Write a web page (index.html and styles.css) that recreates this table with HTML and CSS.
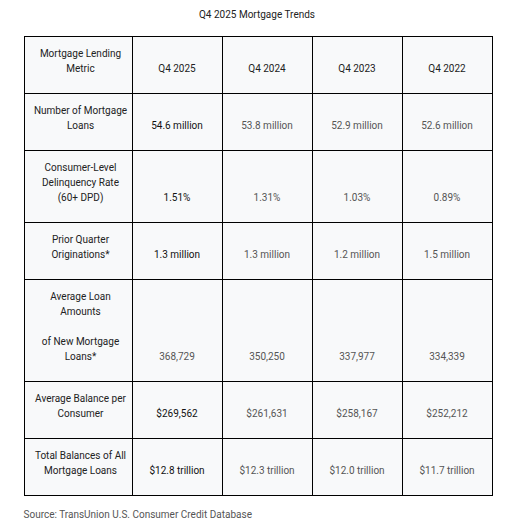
FILE: index.html
```html
<!DOCTYPE html>
<html lang="en">
<head>
  <meta charset="UTF-8">
  <meta name="viewport" content="width=device-width, initial-scale=1.0">
  <title>Q4 2025 Mortgage Trends</title>
  <link rel="stylesheet" href="styles.css">
</head>
<body>
  <div class="wrap">
    <p class="caption">Q4 2025 Mortgage Trends</p>

    <table class="trends">
      <colgroup>
        <col class="c-metric">
        <col class="c-q">
        <col class="c-q">
        <col class="c-q">
        <col class="c-q">
      </colgroup>
      <tr>
        <td class="metric">Mortgage Lending Metric</td>
        <td class="head">Q4 2025</td>
        <td class="head">Q4 2024</td>
        <td class="head">Q4 2023</td>
        <td class="head">Q4 2022</td>
      </tr>
      <tr>
        <td class="metric">Number of Mortgage Loans</td>
        <td class="now">54.6 million</td>
        <td>53.8 million</td>
        <td>52.9 million</td>
        <td>52.6 million</td>
      </tr>
      <tr>
        <td class="metric">Consumer-Level Delinquency Rate (60+ DPD)</td>
        <td class="now">1.51%</td>
        <td>1.31%</td>
        <td>1.03%</td>
        <td>0.89%</td>
      </tr>
      <tr>
        <td class="metric">Prior Quarter Originations*</td>
        <td class="now">1.3 million</td>
        <td>1.3 million</td>
        <td>1.2 million</td>
        <td>1.5 million</td>
      </tr>
      <tr>
        <td class="metric">
          <p>Average Loan Amounts</p>
          <p>of New Mortgage Loans*</p>
        </td>
        <td>368,729</td>
        <td>350,250</td>
        <td>337,977</td>
        <td>334,339</td>
      </tr>
      <tr>
        <td class="metric">Average Balance per Consumer</td>
        <td class="now">$269,562</td>
        <td>$261,631</td>
        <td>$258,167</td>
        <td>$252,212</td>
      </tr>
      <tr>
        <td class="metric">Total Balances of All Mortgage Loans</td>
        <td class="now">$12.8 trillion</td>
        <td>$12.3 trillion</td>
        <td>$12.0 trillion</td>
        <td>$11.7 trillion</td>
      </tr>
    </table>

    <p class="source">Source: TransUnion U.S. Consumer Credit Database</p>
  </div>
</body>
</html>
```

FILE: styles.css
```css
* { margin: 0; padding: 0; box-sizing: border-box; }
body { font-family: Roboto, "Liberation Sans", sans-serif; font-size: 10px; line-height: 15px; color: #222; background: #fff; }
.wrap { width: 467px; margin: 0 auto; padding-top: 7px; }
.caption { text-align: center; color: #222; margin-bottom: 14px; }
.trends { width: 467px; border-collapse: collapse; table-layout: fixed; background: #f8f9fa; }
.c-metric { width: 108px; }
.c-q { width: 90px; }
.trends td { border: 1px solid #000; padding: 9px 4px 17px; text-align: center; vertical-align: bottom; color: #555; }
.trends td.metric { color: #222; vertical-align: top; padding: 9px 3px 17px 8px; }
.trends td.head { color: #222; }
.trends td.now { color: #111; }
.metric p + p { margin-top: 15px; }
.source { color: #555; margin-top: 11px; }
```
